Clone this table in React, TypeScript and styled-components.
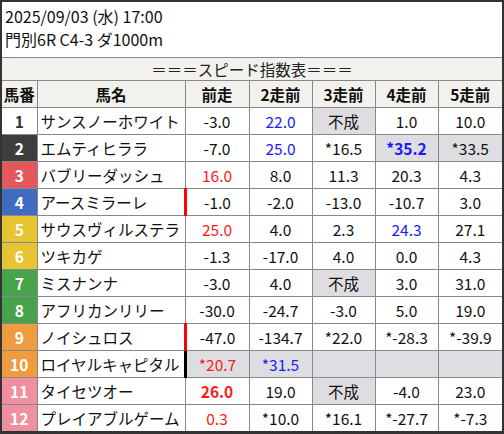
import styled, { createGlobalStyle } from 'styled-components';

const GlobalStyle = createGlobalStyle`
  html, body {
    margin: 0;
    padding: 0;
    background: #fff;
  }
  body {
    font-family: "Noto Sans CJK JP", "Noto Sans", sans-serif;
    color: #111;
  }
`;

type Tone = 'red' | 'blue';
type Cell = { v: string; tone?: Tone; bold?: boolean; gray?: boolean };
type Row = { no: number; name: string; mark?: 'red' | 'black'; cells: Cell[] };

const c = (v: string, opts: Partial<Cell> = {}): Cell => ({ v, ...opts });

const rows: Row[] = [
  { no: 1, name: 'サンスノーホワイト', cells: [c('-3.0'), c('22.0', { tone: 'blue' }), c('不成', { gray: true }), c('1.0'), c('10.0')] },
  { no: 2, name: 'エムティヒララ', cells: [c('-7.0'), c('25.0', { tone: 'blue' }), c('*16.5'), c('*35.2', { tone: 'blue', bold: true, gray: true }), c('*33.5', { gray: true })] },
  { no: 3, name: 'バブリーダッシュ', cells: [c('16.0', { tone: 'red' }), c('8.0'), c('11.3'), c('20.3'), c('4.3')] },
  { no: 4, name: 'アースミラーレ', mark: 'red', cells: [c('-1.0'), c('-2.0'), c('-13.0'), c('-10.7'), c('3.0')] },
  { no: 5, name: 'サウスヴィルステラ', cells: [c('25.0', { tone: 'red' }), c('4.0'), c('2.3'), c('24.3', { tone: 'blue' }), c('27.1')] },
  { no: 6, name: 'ツキカゲ', cells: [c('-1.3'), c('-17.0'), c('4.0'), c('0.0'), c('4.3')] },
  { no: 7, name: 'ミスナンナ', cells: [c('-3.0'), c('4.0'), c('不成', { gray: true }), c('3.0'), c('31.0')] },
  { no: 8, name: 'アフリカンリリー', cells: [c('-30.0'), c('-24.7'), c('-3.0'), c('5.0'), c('19.0')] },
  { no: 9, name: 'ノイシュロス', mark: 'red', cells: [c('-47.0'), c('-134.7'), c('*22.0'), c('*-28.3'), c('*-39.9')] },
  { no: 10, name: 'ロイヤルキャピタル', mark: 'black', cells: [c('*20.7', { tone: 'red', gray: true }), c('*31.5', { tone: 'blue', gray: true }), c('', { gray: true }), c('', { gray: true }), c('', { gray: true })] },
  { no: 11, name: 'タイセツオー', cells: [c('26.0', { tone: 'red', bold: true }), c('19.0'), c('不成', { gray: true }), c('-4.0'), c('23.0')] },
  { no: 12, name: 'プレイアブルゲーム', cells: [c('0.3', { tone: 'red' }), c('*10.0'), c('*16.1'), c('*-27.7'), c('*-7.3')] },
];

const gate: Record<number, { bg: string; fg: string }> = {
  1: { bg: '#ffffff', fg: '#333' },
  2: { bg: '#3e3e3e', fg: '#fff' },
  3: { bg: '#e4575a', fg: '#fff' },
  4: { bg: '#3f6cc0', fg: '#fff' },
  5: { bg: '#e6c432', fg: '#fff' },
  6: { bg: '#e6c432', fg: '#fff' },
  7: { bg: '#47a24c', fg: '#fff' },
  8: { bg: '#47a24c', fg: '#fff' },
  9: { bg: '#ef9b3f', fg: '#fff' },
  10: { bg: '#ef9b3f', fg: '#fff' },
  11: { bg: '#ef8fa0', fg: '#fff' },
  12: { bg: '#ef8fa0', fg: '#fff' },
};

const toneColor: Record<Tone, string> = { red: '#ff1a1a', blue: '#1a1aff' };

const App = () => {
  return (
    <>
      <GlobalStyle />
      <Frame>
        <Title>
          <TitleLine>2025/09/03 (水) 17:00</TitleLine>
          <TitleLine>門別6R C4-3 ダ1000m</TitleLine>
        </Title>
        <Table>
          <colgroup>
            <col style={{ width: 35 }} />
            <col style={{ width: 148 }} />
            <col style={{ width: 64 }} />
            <col style={{ width: 63 }} />
            <col style={{ width: 63 }} />
            <col style={{ width: 63 }} />
            <col style={{ width: 64 }} />
          </colgroup>
          <thead>
            <CaptionRow>
              <CaptionCell colSpan={7}>＝＝＝スピード指数表＝＝＝</CaptionCell>
            </CaptionRow>
            <HeadRow>
              <HeadCell>馬番</HeadCell>
              <HeadCell>馬名</HeadCell>
              <HeadCell>前走</HeadCell>
              <HeadCell>2走前</HeadCell>
              <HeadCell>3走前</HeadCell>
              <HeadCell>4走前</HeadCell>
              <HeadCell>5走前</HeadCell>
            </HeadRow>
          </thead>
          <tbody>
            {rows.map((r) => (
              <DataRow key={r.no}>
                <NoCell $bg={gate[r.no].bg} $fg={gate[r.no].fg}>{r.no}</NoCell>
                <NameCell>{r.name}</NameCell>
                {r.cells.map((cell, i) => (
                  <ValueCell
                    key={i}
                    $gray={cell.gray}
                    $bold={cell.bold}
                    $color={cell.tone ? toneColor[cell.tone] : undefined}
                    $mark={i === 0 ? r.mark : undefined}
                  >
                    {cell.v}
                  </ValueCell>
                ))}
              </DataRow>
            ))}
          </tbody>
        </Table>
      </Frame>
    </>
  );
};
export default App;

const Frame = styled.div`
  width: 504px;
  height: 434px;
  box-sizing: border-box;
  border: 2px solid #333;
  border-bottom-width: 3px;
  background: #fff;
  overflow: hidden;
`;

const Title = styled.div`
  height: 55px;
  padding: 3px 0 0 3px;
  box-sizing: border-box;
  display: flex;
  flex-direction: column;
`;

const TitleLine = styled.div`
  font-size: 16px;
  line-height: 23px;
  color: #111;
`;

const Table = styled.table`
  width: 500px;
  table-layout: fixed;
  border-collapse: collapse;
  font-size: 15.5px;
`;

const CaptionRow = styled.tr`
  height: 23px;
`;

const CaptionCell = styled.td`
  background: #f3f1ed;
  border-top: 1px solid #888;
  text-align: center;
  padding: 0;
  line-height: 21px;
  color: #222;
`;

const HeadRow = styled.tr`
  height: 27px;
`;

const HeadCell = styled.th`
  background: #f3f1ed;
  border: 1px solid #888;
  font-weight: 700;
  padding: 0;
  text-align: center;
  white-space: nowrap;
  color: #111;

  &:first-child {
    border-left: none;
  }
  &:last-child {
    border-right: none;
  }
`;

const DataRow = styled.tr`
  height: 27px;
`;

const NoCell = styled.td<{ $bg: string; $fg: string }>`
  background: ${(p) => p.$bg};
  color: ${(p) => p.$fg};
  border: 1px solid #888;
  border-left: none;
  font-weight: 700;
  text-align: center;
  padding: 0;
`;

const NameCell = styled.td`
  border: 1px solid #888;
  padding: 0 0 0 3px;
  white-space: nowrap;
  overflow: hidden;
  color: #111;
`;

const ValueCell = styled.td<{ $gray?: boolean; $bold?: boolean; $color?: string; $mark?: 'red' | 'black' }>`
  border: 1px solid #888;
  background: ${(p) => (p.$gray ? '#dedee2' : '#fff')};
  color: ${(p) => p.$color ?? '#111'};
  font-weight: ${(p) => (p.$bold ? 700 : 400)};
  text-align: center;
  padding: 0;
  white-space: nowrap;
  ${(p) => (p.$mark ? `border-left: 3px solid ${p.$mark === 'red' ? '#ff0000' : '#000'};` : '')}

  &:last-child {
    border-right: none;
  }
`;
